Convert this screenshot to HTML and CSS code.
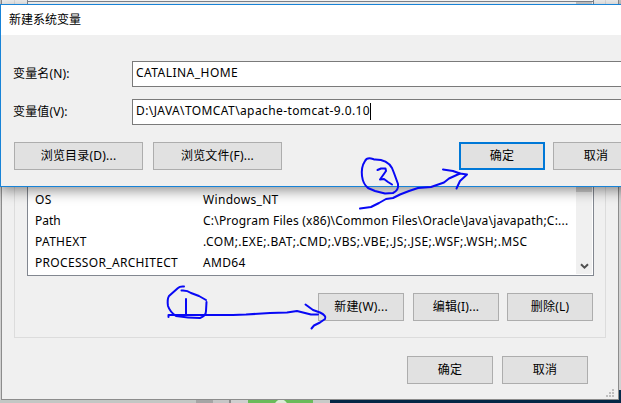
FILE: index.html
```html
<!DOCTYPE html>
<html lang="zh-CN">
<head>
<meta charset="utf-8">
<title>新建系统变量</title>
<link rel="stylesheet" href="styles.css">
</head>
<body>
<div class="desktop">
  <section class="window">
    <div class="group">
      <div class="listbox list-top"></div>
      <div class="listbox list-main">
        <div class="rows">
          <div class="row"><span>OS</span><span>Windows_NT</span></div>
          <div class="row"><span class="plain">Path</span><span class="path">C:\Program Files (x86)\Common Files\Oracle\Java\javapath;C:...</span></div>
          <div class="row"><span>PATHEXT</span><span class="ext">.COM;.EXE;.BAT;.CMD;.VBS;.VBE;.JS;.JSE;.WSF;.WSH;.MSC</span></div>
          <div class="row"><span>PROCESSOR_ARCHITECT</span><span>AMD64</span></div>
        </div>
        <div class="scrollbar">
          <div class="thumb"></div>
          <svg width="9" height="7" viewBox="0 0 9 7"><path d="M1 1.2 4.5 4.7 8 1.2" fill="none" stroke="#505050" stroke-width="2"/></svg>
        </div>
      </div>
      <div class="buttons edit-buttons">
        <div class="button">新建(W)...</div>
        <div class="button">编辑(I)...</div>
        <div class="button last">删除(L)</div>
      </div>
    </div>
    <div class="buttons main-buttons">
      <div class="button">确定</div>
      <div class="button">取消</div>
    </div>
    <svg class="grip" width="8" height="8" viewBox="0 0 8 8" fill="#bfbfbf"><path d="M6 0h2v2H6zM3 3h2v2H3zM6 3h2v2H6zM0 6h2v2H0zM3 6h2v2H3zM6 6h2v2H6z"/></svg>
  </section>
  <div class="taskbar"><i class="strip-a"></i><i class="strip-b"></i><i class="strip-c"></i><i class="strip-d"></i><i class="strip-e"></i></div>

  <section class="dialog">
    <header>新建系统变量</header>
    <div class="field"><label>变量名(N):</label><div class="input name">CATALINA_HOME</div></div>
    <div class="field"><label>变量值(V):</label><div class="input value">D:\JAVA\TOMCAT\apache-tomcat-9.0.10<i class="caret"></i></div></div>
    <div class="actions">
      <div class="button wide">浏览目录(D)...</div>
      <div class="button wide">浏览文件(F)...</div>
      <div class="button primary">确定</div>
      <div class="button">取消</div>
    </div>
  </section>

  <svg class="ink" width="621" height="403" viewBox="0 0 621 403">
    <path d="M184 286.5Q180 286 178 288L169 296Q167 299 168 306Q170 312 176 316Q188 318 200 318Q206 316 206 311L206.500 302"/>
    <path d="M181.500 290.500Q187 290 191 293L199 296L206 300M186 299V315"/>
    <path d="M168.500 317V315H233L246 314.500L270 313L287 312.500L297 311L305 313L311 314.500H318"/>
    <path d="M305.500 304.500L313 310L320 312.500Q327 316 325 319L320 322.500L314 325.500L311.500 328.500"/>
    <path d="M373 159Q367 157 365 161Q361 167 362 176Q363 184 368 188L375 191L385 193.500L393 193Q399 190 398 184L394 173L392 168Q387 159 374 159.500"/>
    <path d="M377.500 170L381 168.500H385.500L386 171L380 179.500L384 179L388 182L392 184.500"/>
    <path d="M360 208.500L371 207L379 203L386 199L393 198L400 194.500L409 191L418 188L431 187L444 182.500L449 178.500L460 173.500"/>
    <path d="M443 169.500L453 171L460 173.500L467 174.500L460 181L456.500 188.500"/>
  </svg>
</div>
</body>
</html>
```
FILE: styles.css
```css
* { box-sizing: border-box; }
body { margin: 0; }
.desktop {
  position: relative;
  width: 621px;
  height: 403px;
  overflow: hidden;
  background:
    linear-gradient(#c9c9c9, #d2d2d2) 0 0 / 100px 100% no-repeat,
    linear-gradient(#c9c9c9 0 120px, #d2d2d2 120px 390px, #052b4b 390px);
  font: 12px/20px "Noto Sans", "Noto Sans CJK SC", sans-serif;
  color: #000;
}
.window {
  position: relative;
  width: 618px;
  height: 400px;
  margin-left: 1px;
  border: 1px solid #8c8c8c;
  border-top: 0;
  background: #f0f0f0;
}
.group {
  width: 592px;
  height: 338px;
  margin-left: 12px;
  padding: 0 11px 0 12px;
  border: 1px solid #dcdcdc;
  border-top: 0;
}
.listbox {
  width: 567px;
  background: #fff;
  border: 1px solid #828790;
}
.list-top { height: 2px; border-top: 0; }
.list-main {
  display: flex;
  justify-content: space-between;
  height: 274px;
  padding: 0 1px 1px 0;
  border-top: 0;
}
.rows { padding: 188px 0 0 7px; letter-spacing: .32px; }
.row {
  display: grid;
  grid-template-columns: 168px 372px;
  height: 21px;
  white-space: nowrap;
}
.plain { letter-spacing: 0; }
.path { letter-spacing: .21px; }
.ext { letter-spacing: .36px; }
.scrollbar {
  display: flex;
  flex-direction: column;
  align-items: center;
  justify-content: space-between;
  width: 16px;
  background: #f0f0f0;
  padding-bottom: 4px;
}
.thumb { width: 16px; height: 190px; background: #cdcdcd; }
.buttons { display: flex; }
.edit-buttons { gap: 9px; margin: 17px 0 0 291px; }
.last { margin-left: -1px; }
.main-buttons { gap: 9px; margin: 18px 0 0 405px; }
.button {
  flex: none;
  width: 86px;
  height: 28px;
  border: 1px solid #adadad;
  background: #e1e1e1;
  line-height: 25px;
  letter-spacing: .2px;
  text-align: center;
}
.grip { position: absolute; right: 4px; bottom: 2px; }
.taskbar { display: flex; height: 3px; background: #032746; }
.strip-a { width: 196px; background: #c2c7c4; }
.strip-b { width: 17px; background: #a5a5a5; }
.strip-c { width: 35px; background: linear-gradient(90deg, #c6c6c6 0 16px, #8c8c8c 16px 18px, #cfcfcf 18px); }
.strip-d { width: 65px; background: radial-gradient(circle at 33px 6px, #dcebd8 6px, #6abb5a 7px); }
.strip-e { width: 17px; background: #c8cbc8; }
.dialog {
  position: absolute;
  left: 0;
  top: 4px;
  width: 660px;
  height: 183px;
  border: 1px solid #1883d7;
  background: #f0f0f0;
  box-shadow: 0 4px 12px rgba(0, 0, 0, .42);
}
.dialog header {
  height: 30px;
  margin-bottom: 26px;
  padding-left: 8px;
  background: #fff;
  line-height: 29px;
}
.field { display: flex; height: 26px; margin-bottom: 12px; }
.field label { width: 131px; padding-left: 12px; line-height: 25px; letter-spacing: .15px; }
.input {
  display: flex;
  flex: 1;
  padding-left: 3px;
  border: 1px solid #7a7a7a;
  background: #fff;
  line-height: 22px;
}
.name { letter-spacing: .46px; }
.value { letter-spacing: .4px; }
.caret { width: 1px; height: 17px; margin-top: 3px; background: #000; }
.actions { display: flex; margin: 17px 0 0 13px; }
.wide { width: 129px; margin-right: 10px; }
.primary { border: 2px solid #0078d7; line-height: 23px; margin: 0 8px 0 167px; }
.ink {
  position: absolute;
  left: 0;
  top: 0;
  fill: none;
  stroke: #0808f5;
  stroke-width: 2;
  stroke-linecap: round;
  stroke-linejoin: round;
}
```
